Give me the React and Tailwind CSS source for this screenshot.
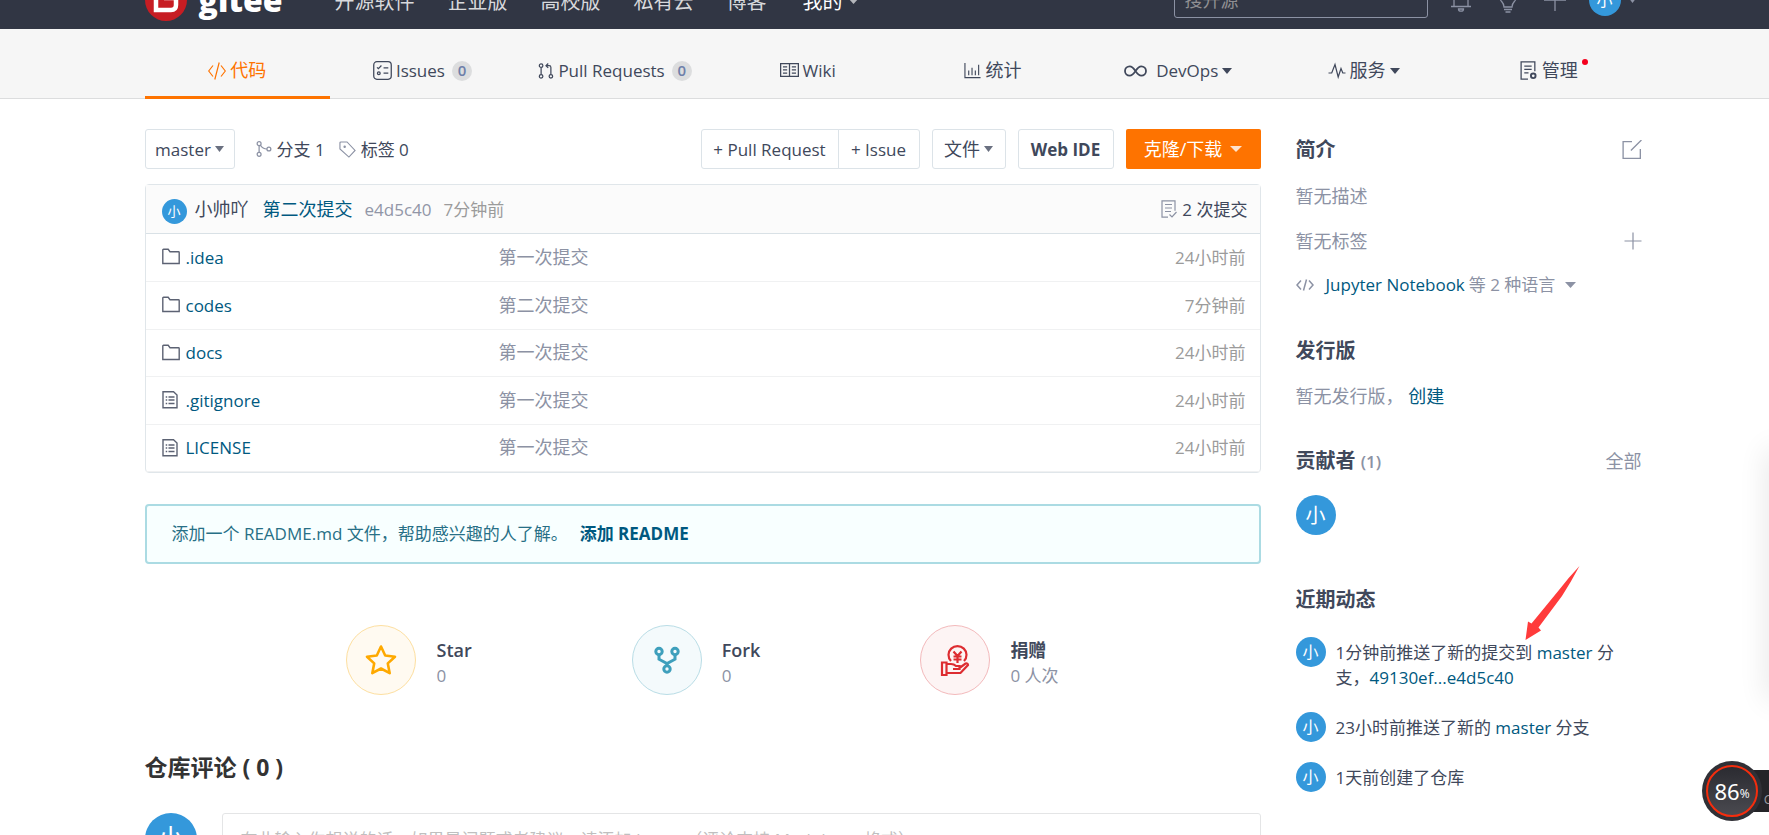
const Caret = ({ className = 'w-[10px]' }) => (
  <svg className={`h-[6px] shrink-0 ${className}`} viewBox="0 0 10 6" preserveAspectRatio="none" fill="currentColor" aria-hidden="true">
    <path d="M0 0h10L5 6z" />
  </svg>
);

const Icon = ({ children, className = 'w-[18px] h-[18px]', width = 1.2 }) => (
  <svg className={`shrink-0 ${className}`} viewBox="0 0 18 18" fill="none" stroke="currentColor" strokeWidth={width} aria-hidden="true">
    {children}
  </svg>
);

const CodeIcon = () => (
  <Icon className="h-5 w-[18px]">
    <path d="M5 3.500L0.700 9 5 14.500M13 3.500L17.300 9 13 14.500M11.200 0.500L6.800 17.500" />
  </Icon>
);

const IssuesIcon = () => (
  <Icon className="h-[19px] w-[19px]">
    <rect x="0.700" y="0.700" width="16.600" height="16.600" rx="3" />
    <path d="M3.800 6l1.300 1.300L8 4.300M10 6.500h4.500M10 11.500h4.500" />
    <circle cx="5.500" cy="11.700" r="1.300" />
  </Icon>
);

const PullIcon = () => (
  <Icon className="w-4 h-4" width={1.4}>
    <circle cx="3.500" cy="3" r="2" />
    <circle cx="3.500" cy="15" r="2" />
    <circle cx="14.500" cy="15" r="2" />
    <path d="M3.500 5v8M14.500 13V5q0-2-2-2H9M11.500 0.500L9 3l2.500 2.500" />
  </Icon>
);

const WikiIcon = () => (
  <Icon className="h-[19px] w-[19px]">
    <path d="M0.600 2.500h16.800v12H0.600zM9 2.500v12M2.800 5.500h4M2.800 8.500h4M2.800 11.500h4M11.200 5.500h4M11.200 8.500h4M11.200 11.500h4" />
  </Icon>
);

const StatsIcon = () => (
  <Icon className="h-[17px] w-[17px]">
    <path d="M1 1v15.500h16.500M5 14V9M8.500 14V6M12 14V9M15.500 14V3" />
  </Icon>
);

const DevOpsIcon = () => (
  <svg className="w-[23px] h-[14px] shrink-0" viewBox="0 0 23 14" fill="none" stroke="currentColor" strokeWidth="1.800" aria-hidden="true">
    <path d="M11.500 7C9.500 4 8 2.300 5.700 2.300a4.700 4.700 0 000 9.400C8 11.700 9.500 10 11.500 7s3.500-4.700 5.800-4.700a4.700 4.700 0 010 9.400C15 11.700 13.500 10 11.500 7z" />
  </svg>
);

const PulseIcon = () => (
  <Icon>
    <path d="M0.500 11h3.200L7 2.500l3.200 12.500L13 6.500l1.800 4.500h2.700" />
  </Icon>
);

const ManageIcon = () => (
  <Icon className="h-[19px] w-[19px]">
    <path d="M8.500 17.200H2V0.800h13v9M5 4.800h7M5 8h7M5 11.200h4" />
    <circle cx="13.500" cy="14" r="2.200" strokeWidth="1.800" />
  </Icon>
);

const BranchIcon = () => (
  <Icon className="w-4 h-4" width={1.4}>
    <circle cx="3.500" cy="3" r="2.200" />
    <circle cx="3.500" cy="15" r="2.200" />
    <circle cx="14.500" cy="9" r="2.200" />
    <path d="M3.500 5.200v7.600M5 4.800Q7.500 9 12.300 9" />
  </Icon>
);

const TagIcon = () => (
  <Icon className="w-[17px] h-[17px]">
    <path d="M1 2q0-1 1-1h6.500l8.500 9-6.500 7L1 8.500z" />
    <circle cx="6" cy="6" r="0.700" fill="currentColor" />
  </Icon>
);

const FolderIcon = () => (
  <Icon className="w-[18px] h-[18px] text-[#5c6273]" width={1.4}>
    <path d="M0.800 15.500V2q0-.700.700-.700h4.700L8 3.700h8.500q.700 0 .700.700v11.100z" />
  </Icon>
);

const FileIcon = () => (
  <Icon className="w-[18px] h-[18px] text-[#5c6273]" width={1.4}>
    <path d="M1 0.800h10.500L15 4v12.700H1zM6.500 6h6M6.500 9h6M6.500 12.500h6M3.700 6h1.500M3.700 9h1.500M3.700 12.500h1.500" />
  </Icon>
);

const CommitsIcon = () => (
  <Icon className="w-[18px] h-[18px] text-[#8c92a4]">
    <path d="M8 17.200H2V0.800h13v10M5 4.500h7M5 8h7M5 11.500h6M9.500 14.500l2.500 2.500 4.500-5" />
  </Icon>
);

const Avatar = ({ className }) => (
  <span className={`flex shrink-0 items-center justify-center rounded-full bg-[#3498db] text-white ${className}`}>小</span>
);

const menu = ['开源软件', '企业版', '高校版', '私有云', '博客'];

const tabs = [
  { label: '代码', icon: <CodeIcon />, active: true, size: 'text-[18px]' },
  { label: 'Issues', icon: <IssuesIcon />, count: 0 },
  { label: 'Pull Requests', icon: <PullIcon />, count: 0, wide: true },
  { label: 'Wiki', icon: <WikiIcon /> },
  { label: '统计', icon: <StatsIcon />, size: 'text-[18px]' },
  { label: 'DevOps', icon: <DevOpsIcon />, caret: true, size: 'ml-[5px]' },
  { label: '服务', icon: <PulseIcon />, caret: true, size: 'text-[18px]' },
  { label: '管理', icon: <ManageIcon />, dot: true, size: 'text-[18px]' },
];

const files = [
  { name: '.idea', dir: true, message: '第一次提交', time: '24小时前' },
  { name: 'codes', dir: true, message: '第二次提交', time: '7分钟前' },
  { name: 'docs', dir: true, message: '第一次提交', time: '24小时前' },
  { name: '.gitignore', message: '第一次提交', time: '24小时前' },
  { name: 'LICENSE', message: '第一次提交', time: '24小时前' },
];

const Header = () => (
  <header className="h-[29px] overflow-hidden bg-[#313644] pl-[17px]">
    <div className="mx-auto -mt-[29px] flex h-[58px] max-w-[1497px] items-center">
      <a href="#" className="flex items-center gap-3 text-white">
        <svg className="h-[42px] w-[42px]" viewBox="0 0 42 42" aria-hidden="true">
          <circle cx="21" cy="21" r="21" fill="#c71d23" />
          <path d="M31 11H17q-6 0-6 6v14h15q5 0 5-5v-7H19" fill="none" stroke="#fff" strokeWidth="4.500" />
        </svg>
        <span className="font-['Open_Sans'] text-[32px] leading-[40px] font-extrabold">gitee</span>
      </a>
      <nav className="ml-[52px] flex items-center gap-[33px] pt-[2px] text-[20px] text-[#d8d9dc]">
        {menu.map((item) => (
          <a key={item} href="#" className="whitespace-nowrap">{item}</a>
        ))}
        <a href="#" className="ml-[3px] flex items-center gap-[5px] whitespace-nowrap text-white">
          我的 <Caret className="w-[11px] text-[#b4b6bb]" />
        </a>
      </nav>
      <input
        type="search"
        aria-label="搜索"
        placeholder="搜开源"
        className="ml-auto h-9 w-[254px] rounded-[3px] border border-[#8c92a4] bg-transparent px-[10px] text-[18px] placeholder:text-[#8f8f92]"
      />
      <div className="ml-[22px] flex items-center gap-[25px] text-[#8c92a4]">
        <button type="button" aria-label="通知">
          <svg className="h-6 w-[22px]" viewBox="0 0 22 24" fill="none" stroke="currentColor" strokeWidth="1.300">
            <path d="M1 18.500h20M4 18.500V8a7 7 0 0114 0v10.500M8.500 21a2.500 2.200 0 005 0z" />
          </svg>
        </button>
        <button type="button" aria-label="动态">
          <svg className="h-[26px] w-[22px]" viewBox="0 0 22 26" fill="none" stroke="currentColor" strokeWidth="1.300">
            <path d="M7 20q0-3-3-6.500a9 9 0 1114 0Q15 17 15 20zM7 22.500h8M8.500 25h5" />
          </svg>
        </button>
        <button type="button" aria-label="新建">
          <svg className="h-[22px] w-[22px]" viewBox="0 0 22 22" fill="none" stroke="currentColor" strokeWidth="1.300">
            <path d="M11 0v22M0 11h22" />
          </svg>
        </button>
      </div>
      <button type="button" aria-label="账户" className="mr-[5px] ml-[23px] flex items-center gap-[7px] text-[#8c92a4]">
        <Avatar className="h-8 w-8 text-[16px]" />
        <Caret className="w-[9px]" />
      </button>
    </div>
  </header>
);

const Tabs = () => (
  <nav className="border-b border-[#dcddde] bg-[#f6f6f6] pl-[17px]">
    <div className="mx-auto flex max-w-[1497px]">
      {tabs.map((tab) => (
        <a
          key={tab.label}
          href="#"
          className={`-mb-px flex h-[70px] items-center justify-center gap-1 border-b-[3px] pt-4 whitespace-nowrap ${
            tab.wide ? 'w-[200px] shrink-0' : 'flex-1 basis-0'
          } ${tab.active ? 'border-[#fe7300] text-[#fe7300]' : 'border-transparent'}`}
        >
          {tab.icon}
          <span className={tab.size}>{tab.label}</span>
          {tab.count !== undefined && (
            <span className="ml-[3px] flex h-5 w-5 items-center justify-center rounded-full bg-[#dcddde] text-[15px] font-semibold text-[#6e7fa9]">
              {tab.count}
            </span>
          )}
          {tab.caret && <Caret />}
          {tab.dot && <span className="mb-[18px] -mr-[9px] h-[6px] w-[6px] rounded-full bg-[#f5001d]" />}
        </a>
      ))}
    </div>
  </nav>
);

const buttonClass = 'flex h-10 items-center justify-center border border-[#dce3e8] whitespace-nowrap';

const Toolbar = () => (
  <div className="flex items-center">
    <button type="button" className={`${buttonClass} w-[90px] gap-1 rounded-[3px]`}>
      master <Caret className="w-[9px] text-[#6a7080]" />
    </button>
    <a href="#" className="ml-[21px] flex items-center gap-[5px]">
      <span className="text-[#8c92a4]"><BranchIcon /></span>分支 1
    </a>
    <a href="#" className="ml-[14px] flex items-center gap-[5px]">
      <span className="text-[#8c92a4]"><TagIcon /></span>标签 0
    </a>
    <div className="ml-auto flex gap-3">
      <div className="flex">
        <button type="button" className={`${buttonClass} w-[138px] rounded-l-[3px]`}>+ Pull Request</button>
        <button type="button" className={`${buttonClass} -ml-px w-[82px] rounded-r-[3px]`}>+ Issue</button>
      </div>
      <button type="button" className={`${buttonClass} w-[74px] gap-1 rounded-[3px] text-[18px]`}>
        文件 <Caret className="w-[9px] text-[#6a7080]" />
      </button>
      <button type="button" className={`${buttonClass} w-[96px] rounded-[3px] font-bold`}>Web IDE</button>
      <button type="button" className="flex h-10 w-[135px] items-center justify-center gap-2 rounded-[2px] bg-[#fe7300] text-[18px] whitespace-nowrap text-white">
        克隆/下载 <Caret className="w-[12px] text-[#ffe3cc]" />
      </button>
    </div>
  </div>
);

const FileTable = () => (
  <section className="mt-[15px] rounded-[4px] border border-[#e0e6ea]">
    <div className="flex h-[49px] items-center border-b border-[#d9e1e6] bg-[#fbfbfb] pr-3 pl-4 whitespace-nowrap">
      <Avatar className="mt-[4px] h-[25px] w-[25px] text-[13px]" />
      <a href="#" className="ml-2 text-[18px]">小帅吖</a>
      <a href="#" className="ml-[14px] text-[18px] text-[#005980]">第二次提交</a>
      <a href="#" className="ml-3 text-[#9196a7]">e4d5c40</a>
      <span className="ml-3 text-[#9b9b9b]">7分钟前</span>
      <a href="#" className="ml-auto flex items-center gap-1">
        <CommitsIcon /> 2 次提交
      </a>
    </div>
    <table className="w-full table-fixed">
      <tbody>
        {files.map((file) => (
          <tr key={file.name} className="h-[47px] border-b border-[#f0f1f2] even:h-[48px]">
            <td className="w-[353px] pl-4">
              <a href="#" className="flex items-center gap-[6px] text-[#005980]">
                {file.dir ? <FolderIcon /> : <FileIcon />}
                {file.name}
              </a>
            </td>
            <td className="text-[18px] text-[#8c92a4]">{file.message}</td>
            <td className="w-[160px] pr-[14px] text-right text-[#9b9b9b]">{file.time}</td>
          </tr>
        ))}
      </tbody>
    </table>
  </section>
);

const stats = [
  {
    label: 'Star',
    value: '0',
    circle: 'border-[#fddfa0] bg-[#fffaf1] text-[#fea900]',
    icon: (
      <svg className="h-8 w-8" viewBox="0 0 32 32" fill="none" stroke="currentColor" strokeWidth="2.600" strokeLinejoin="round">
        <path d="M16 2.500l4.200 9 9.800 1.200-7.200 6.700 1.900 9.800L16 24.500l-8.700 4.700 1.900-9.800L2 12.700l9.800-1.200z" />
      </svg>
    ),
  },
  {
    label: 'Fork',
    value: '0',
    circle: 'border-[#b9dde6] bg-[#f4fafc] text-[#3e9fbc]',
    icon: (
      <svg className="h-7 w-7" viewBox="0 0 28 28" fill="none" stroke="currentColor" strokeWidth="3">
        <circle cx="6" cy="5.500" r="3.200" />
        <circle cx="22" cy="5.500" r="3.200" />
        <circle cx="14" cy="23" r="3.200" />
        <path d="M6 8.700v4.500L14 17.500l8-4.300V8.700M14 17v3" />
      </svg>
    ),
  },
  {
    label: '捐赠',
    value: '0 人次',
    circle: 'border-[#f3b9bb] bg-[#fdf4f4] text-[#dd2c31]',
    icon: (
      <svg className="h-8 w-8" viewBox="0 0 32 32" fill="none" stroke="currentColor" strokeWidth="2.200">
        <path d="M12 17a9 8.800 0 1113 0M14.500 7.500l4 4.500 4-4.500M14.500 12.500h8M14.500 15.500h8M18.500 12v7" />
        <path d="M3 18.500h4.500V31H3zM7.500 20H12q3 0 5 2h3.500v3H14M20.500 24l6-4.500q2.500-.500 2.500 1.500l-7.500 8H7.500" />
      </svg>
    ),
  },
];

const Stats = () => (
  <div className="mt-[61px] flex justify-center gap-[160px]">
    {stats.map((stat) => (
      <a key={stat.label} href="#" className="flex items-center gap-5">
        <span className={`flex h-[70px] w-[70px] items-center justify-center rounded-full border ${stat.circle}`}>{stat.icon}</span>
        <span className="flex flex-col pt-[6px] leading-[25px] whitespace-nowrap">
          <b className="text-[18px] font-semibold">{stat.label}</b>
          <span className="text-[#8c92a4]">{stat.value}</span>
        </span>
      </a>
    ))}
  </div>
);

const Comments = () => (
  <section className="mt-[55px]">
    <h2 className="text-[23px] leading-[34px] font-bold text-[#333]">仓库评论 ( 0 )</h2>
    <div className="mt-[29px] flex h-[22px] items-start overflow-hidden">
      <Avatar className="h-[52px] w-[52px] text-[26px]" />
      <textarea
        aria-label="评论"
        placeholder="在此输入你想说的话，如果是问题或者建议，请添加 Issue。（评论支持 Markdown 格式）"
        className="ml-[25px] h-[120px] flex-1 resize-none rounded-[3px] border border-[#e4e5e6] px-[18px] py-[13px] placeholder:text-[#bfbfbf]"
      />
    </div>
  </section>
);

const Main = () => (
  <main className="min-w-0 flex-1">
    <Toolbar />
    <FileTable />
    <div className="mt-[31px] flex h-[60px] items-center rounded-[4px] border-2 border-[#abdbe3] bg-[#f8ffff] px-[25px] whitespace-nowrap text-[#276f86]">
      添加一个 README.md 文件，帮助感兴趣的人了解。
      <a href="#" className="ml-3 font-bold text-[#005980]">添加 README</a>
    </div>
    <Stats />
    <Comments />
  </main>
);

const headingClass = 'text-[20px] leading-[30px] font-bold';
const linkClass = 'text-[#005980]';

const Sidebar = () => (
  <aside className="w-[346px] shrink-0 pt-[6px] text-[#8c92a4]">
    <div className="flex items-center justify-between">
      <h3 className={`${headingClass} text-[#40485b]`}>简介</h3>
      <button type="button" aria-label="编辑">
        <Icon className="h-5 w-5">
          <path d="M9 1.500H1v15h15.500V8M8 9.500L17.500 0" />
        </Icon>
      </button>
    </div>
    <p className="mt-[18px] text-[18px] leading-[26px]">暂无描述</p>
    <div className="mt-[19px] flex items-center justify-between text-[18px] leading-[26px]">
      <span>暂无标签</span>
      <button type="button" aria-label="添加标签">
        <Icon><path d="M9 0.500v17M0.500 9h17" /></Icon>
      </button>
    </div>
    <div className="mt-[18px] flex items-center leading-[26px] whitespace-nowrap">
      <Icon className="h-[18px] w-[18px]" width={1.5}>
        <path d="M5 4.500L1 9l4 4.500M13 4.500L17 9l-4 4.500M10.500 3.500l-3 11" />
      </Icon>
      <a href="#" className={`ml-3 ${linkClass}`}>Jupyter Notebook</a>
      <button type="button" className="ml-1 flex items-center gap-[10px]">
        等 2 种语言 <Caret className="w-[11px]" />
      </button>
    </div>

    <h3 className={`${headingClass} mt-[38px] text-[#40485b]`}>发行版</h3>
    <p className="mt-[17px] text-[18px] leading-[26px]">
      暂无发行版， <a href="#" className={linkClass}>创建</a>
    </p>

    <div className="mt-[37px] flex items-center justify-between">
      <h3 className={`${headingClass} text-[#40485b]`}>
        贡献者 <span className="text-[17px] font-semibold text-[#8c92a4]">(1)</span>
      </h3>
      <a href="#" className="text-[18px]">全部</a>
    </div>
    <Avatar className="mt-[18px] h-10 w-10 text-[20px]" />

    <h3 className={`${headingClass} mt-[50px] text-[#40485b]`}>近期动态</h3>
    <ul className="mt-[22px] flex flex-col gap-5 leading-[25px] text-[#40485b]">
      <li className="flex gap-[10px]">
        <Avatar className="h-[30px] w-[30px] text-[16px]" />
        <p className="w-[290px] pt-[3px] pb-[2px]">
          1分钟前推送了新的提交到 <a href="#" className={linkClass}>master</a> 分支，
          <a href="#" className={linkClass}>49130ef...e4d5c40</a>
        </p>
      </li>
      <li className="flex gap-[10px]">
        <Avatar className="h-[30px] w-[30px] text-[16px]" />
        <p className="pt-[3px] pb-[2px]">
          23小时前推送了新的 <a href="#" className={linkClass}>master</a> 分支
        </p>
      </li>
      <li className="flex gap-[10px]">
        <Avatar className="h-[30px] w-[30px] text-[16px]" />
        <p className="pt-[3px] pb-[2px]">1天前创建了仓库</p>
      </li>
    </ul>
  </aside>
);

export default function App() {
  return (
    <div className="relative overflow-hidden bg-white font-['Open_Sans','Noto_Sans_CJK_SC',sans-serif] text-[17px] leading-[25px] text-[#40485b]">
      <Header />
      <Tabs />
      <div className="pl-[17px]">
        <div className="mx-auto flex max-w-[1497px] gap-[35px] pt-[30px]">
          <Main />
          <Sidebar />
        </div>
      </div>

      {/* Red arrow pointing at the latest push */}
      <svg className="absolute top-[565px] left-[1524px] h-[76px] w-[56px]" viewBox="0 0 56 76" fill="#ff3b3b" aria-hidden="true">
        <path d="M55.500 1Q45 12 35 25L7.500 58.500 4 56.500 1.500 75 17 65.500 14.500 62.500 38 31Q47 17 55.500 1z" />
      </svg>

      {/* Panel shadow leaking in from the right edge */}
      <div className="absolute top-[450px] -right-5 h-[250px] w-5 shadow-[0_0_30px_rgba(0,0,0,0.12)]" />

      {/* Floating memory usage ball */}
      <div className="absolute top-[761px] right-0 flex h-[60px] w-[67px] items-center">
        <div className="absolute top-[9px] right-0 flex h-[42px] w-[37px] items-end justify-end overflow-hidden bg-[#242428] text-[13px] text-[#9a9aa0]">
          <span className="-mr-[3px]">C</span>
        </div>
        <div className="relative flex h-[60px] w-[60px] items-center justify-center rounded-full bg-[#303036]">
          <div className="flex h-[52px] w-[52px] items-center justify-center rounded-full border-2 border-[#f52d0d] bg-gradient-to-b from-[#2b2b31] to-[#4a4a50] text-white">
            <span className="font-['Noto_Sans'] text-[22px]">86</span>
            <span className="pt-[5px] text-[12px]">%</span>
          </div>
        </div>
      </div>
    </div>
  );
}
